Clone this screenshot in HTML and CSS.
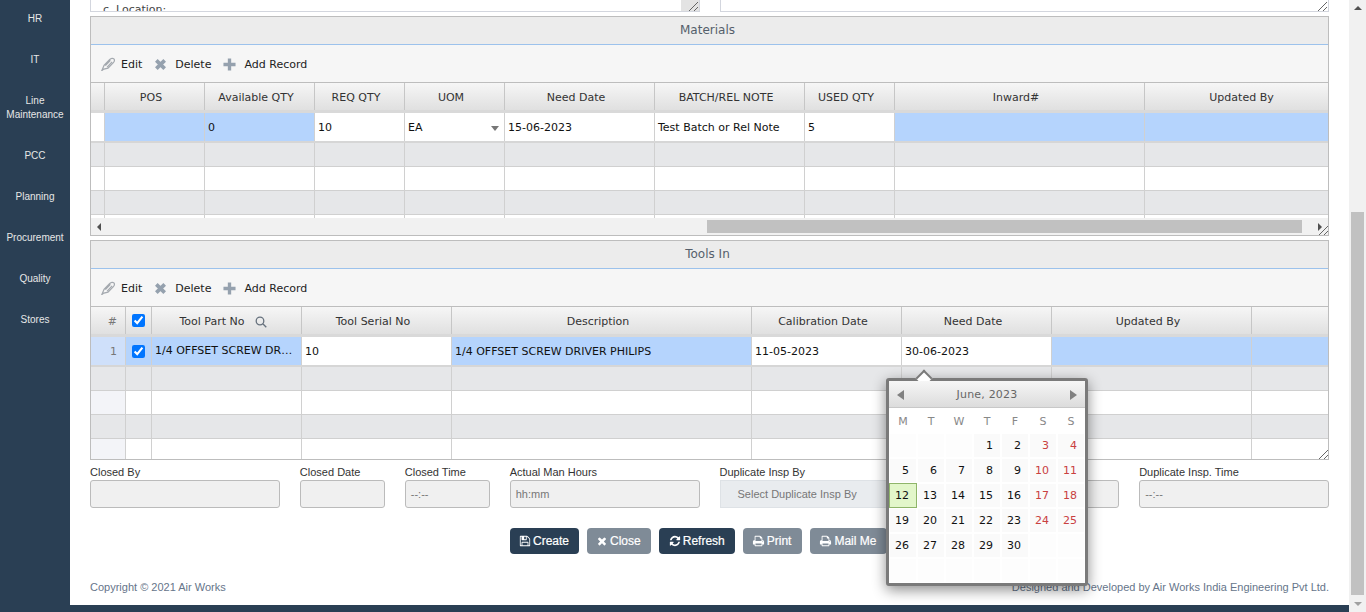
FILE: index.html
```html
<!DOCTYPE html>
<html lang="en">
	<head>
		<meta charset="UTF-8">
		<title>Air Works</title>
		<link rel="stylesheet" href="styles.css">
	</head>
	<body>
		<svg class="defs" width="0" height="0">
			<symbol id="i-save" viewBox="0 0 1792 1792"><path d="M512 1536h768v-384h-768v384zm896 0h128v-896q0-14-10-38.5t-20-34.5l-281-281q-10-10-34-20t-39-10v416q0 40-28 68t-68 28h-576q-40 0-68-28t-28-68v-416h-128v1280h128v-416q0-40 28-68t68-28h832q40 0 68 28t28 68v416zm-384-928v-320q0-13-9.5-22.5t-22.5-9.5h-192q-13 0-22.5 9.5t-9.5 22.5v320q0 13 9.5 22.5t22.5 9.5h192q13 0 22.5-9.5t9.5-22.5zm640 32v928q0 40-28 68t-68 28h-1344q-40 0-68-28t-28-68v-1344q0-40 28-68t68-28h928q40 0 88 20t76 48l280 280q28 28 48 76t20 88z"/></symbol>
			<symbol id="i-times" viewBox="0 0 1792 1792"><path d="M1490 1322q0 40-28 68l-136 136q-28 28-68 28t-68-28l-294-294-294 294q-28 28-68 28t-68-28l-136-136q-28-28-28-68t28-68l294-294-294-294q-28-28-28-68t28-68l136-136q28-28 68-28t68 28l294 294 294-294q28-28 68-28t68 28l136 136q28 28 28 68t-28 68l-294 294 294 294q28 28 28 68z"/></symbol>
			<symbol id="i-refresh" viewBox="0 0 1792 1792"><path d="M1639 1056q0 5-1 7-64 268-268 434.5t-478 166.5q-146 0-282.5-55t-243.5-157l-129 129q-19 19-45 19t-45-19-19-45v-448q0-26 19-45t45-19h448q26 0 45 19t19 45-19 45l-137 137q71 66 161 102t187 36q134 0 250-65t186-179q11-17 53-117 8-23 30-23h192q13 0 22.5 9.5t9.5 22.5zm25-800v448q0 26-19 45t-45 19h-448q-26 0-45-19t-19-45 19-45l138-138q-148-137-349-137-134 0-250 65t-186 179q-11 17-53 117-8 23-30 23h-199q-13 0-22.5-9.5t-9.5-22.5v-7q65-268 270-434.5t480-166.5q146 0 284 55.5t245 156.5l130-129q19-19 45-19t45 19 19 45z"/></symbol>
			<symbol id="i-print" viewBox="0 0 1792 1792"><path d="M448 1536h896v-256h-896v256zm0-640h896v-384h-160q-40 0-68-28t-28-68v-160h-640v640zm1152 64q0-26-19-45t-45-19-45 19-19 45 19 45 45 19 45-19 19-45zm128 0v416q0 13-9.5 22.5t-22.5 9.5h-224v160q0 40-28 68t-68 28h-960q-40 0-68-28t-28-68v-160h-224q-13 0-22.5-9.5t-9.5-22.5v-416q0-79 56.5-135.5t135.5-56.5h64v-544q0-40 28-68t68-28h672q40 0 88 20t76 48l152 152q28 28 48 76t20 88v256h64q79 0 135.5 56.5t56.5 135.5z"/></symbol>
			<symbol id="i-edit" viewBox="0 0 16 16"><path d="M1 15.500 3.500 9.500 10 2.800c1.500-1.500 3.700-1.700 4.700-.6 1 1.200.5 3.200-.8 4.500L8 12.800 3.300 13.800zM5 9.800 10.800 3.800M7 11.500l5.700-6" fill="none" stroke="#a4a9af" stroke-width="1.400"/></symbol>
			<symbol id="i-delete" viewBox="0 0 14 14"><path d="M2.500 2.500l9 9M11.500 2.500l-9 9" fill="none" stroke="#95a1ae" stroke-width="4"/></symbol>
			<symbol id="i-add" viewBox="0 0 14 14"><path d="M7 .5v13M.5 7h13" fill="none" stroke="#95a1ae" stroke-width="3.600"/></symbol>
			<symbol id="i-grip" viewBox="0 0 10 10"><path d="M1 10 10 1M6 10l4-4" fill="none" stroke="#666" stroke-width="1"/></symbol>
		</svg>

		<div class="app">
			<nav class="sidebar">
				<a>HR</a>
				<a>IT</a>
				<a>Line Maintenance</a>
				<a>PCC</a>
				<a>Planning</a>
				<a>Procurement</a>
				<a>Quality</a>
				<a>Stores</a>
			</nav>

			<main class="main">
				<div class="content">
					<div class="notes">
						<div class="note note-left">c. Location:<span class="note-corner"><svg class="grip"><use href="#i-grip"/></svg></span></div>
						<div class="note note-right"><svg class="grip"><use href="#i-grip"/></svg></div>
					</div>

					<section class="panel">
						<h2 class="panel-title">Materials</h2>
						<div class="toolbar">
							<span class="tool tool-edit"><svg class="ico-edit"><use href="#i-edit"/></svg>Edit</span>
							<span class="tool"><svg class="ico-tool"><use href="#i-delete"/></svg>Delete</span>
							<span class="tool"><svg class="ico-tool"><use href="#i-add"/></svg>Add Record</span>
						</div>
						<div class="grid grid-mat">
							<div class="row row-head">
								<span></span><span>POS</span><span>Available QTY</span><span>REQ QTY</span><span>UOM</span><span>Need Date</span><span>BATCH/REL NOTE</span><span>USED QTY</span><span>Inward#</span><span>Updated By</span>
							</div>
							<div class="row row-sel">
								<span class="edit"></span><span></span><span>0</span><span class="edit">10</span><span class="edit uom">EA<i class="caret"></i></span><span class="edit">15-06-2023</span><span class="edit">Test Batch or Rel Note</span><span class="edit">5</span><span></span><span></span>
							</div>
							<div class="row row-grey"><span></span><span></span><span></span><span></span><span></span><span></span><span></span><span></span><span></span><span></span></div>
							<div class="row"><span></span><span></span><span></span><span></span><span></span><span></span><span></span><span></span><span></span><span></span></div>
							<div class="row row-grey"><span></span><span></span><span></span><span></span><span></span><span></span><span></span><span></span><span></span><span></span></div>
							<div class="row"><span></span><span></span><span></span><span></span><span></span><span></span><span></span><span></span><span></span><span></span></div>
						</div>
						<div class="hscroll">
							<i class="arrow arrow-left"></i>
							<div class="hscroll-track"><div class="hscroll-thumb"></div></div>
							<i class="arrow arrow-right"></i>
						</div>
						<svg class="grip grip-panel"><use href="#i-grip"/></svg>
					</section>

					<section class="panel">
						<h2 class="panel-title">Tools In</h2>
						<div class="toolbar">
							<span class="tool tool-edit"><svg class="ico-edit"><use href="#i-edit"/></svg>Edit</span>
							<span class="tool"><svg class="ico-tool"><use href="#i-delete"/></svg>Delete</span>
							<span class="tool"><svg class="ico-tool"><use href="#i-add"/></svg>Add Record</span>
						</div>
						<div class="grid grid-tools">
							<div class="row row-head">
								<span class="num">#</span><span class="check"><input type="checkbox" checked></span>
								<span class="with-search">Tool Part No<svg class="ico-search" viewBox="0 0 12 12"><circle cx="5" cy="5" r="3.800"/><path d="M8 8l3.300 3.300"/></svg></span>
								<span>Tool Serial No</span><span>Description</span><span>Calibration Date</span><span>Need Date</span><span>Updated By</span><span></span>
							</div>
							<div class="row row-sel">
								<span class="num num-sel">1</span><span class="check"><input type="checkbox" checked></span>
								<span class="clip">1/4 OFFSET SCREW DRIVER PHILIPS</span><span class="edit">10</span><span>1/4 OFFSET SCREW DRIVER PHILIPS</span><span class="edit">11-05-2023</span><span class="edit">30-06-2023</span><span></span><span></span>
							</div>
							<div class="row row-grey"><span></span><span></span><span></span><span></span><span></span><span></span><span></span><span></span><span></span></div>
							<div class="row"><span class="rowhead"></span><span></span><span></span><span></span><span></span><span></span><span></span><span></span><span></span></div>
							<div class="row row-grey"><span></span><span></span><span></span><span></span><span></span><span></span><span></span><span></span><span></span></div>
							<div class="row"><span class="rowhead"></span><span></span><span></span><span></span><span></span><span></span><span></span><span></span><span></span></div>
						</div>
						<svg class="grip grip-panel"><use href="#i-grip"/></svg>

						<div class="calendar">
							<i class="cal-tip"></i>
							<div class="cal-head"><i class="arrow-lg arrow-lg-left"></i><span>June, 2023</span><i class="arrow-lg arrow-lg-right"></i></div>
							<div class="cal-dow"><span>M</span><span>T</span><span>W</span><span>T</span><span>F</span><span>S</span><span>S</span></div>
							<div class="cal-days">
								<span></span><span></span><span></span><span>1</span><span>2</span><span class="we">3</span><span class="we">4</span>
								<span>5</span><span>6</span><span>7</span><span>8</span><span>9</span><span class="we">10</span><span class="we">11</span>
								<span class="today">12</span><span>13</span><span>14</span><span>15</span><span>16</span><span class="we">17</span><span class="we">18</span>
								<span>19</span><span>20</span><span>21</span><span>22</span><span>23</span><span class="we">24</span><span class="we">25</span>
								<span>26</span><span>27</span><span>28</span><span>29</span><span>30</span><span></span><span></span>
								<span></span><span></span><span></span><span></span><span></span><span></span><span></span>
							</div>
						</div>
					</section>

					<div class="fields">
						<div class="field f-wide"><label>Closed By</label><div class="input"></div></div>
						<div class="field f-small"><label>Closed Date</label><div class="input"></div></div>
						<div class="field f-small"><label>Closed Time</label><div class="input">--:--</div></div>
						<div class="field f-wide"><label>Actual Man Hours</label><div class="input">hh:mm</div></div>
						<div class="field f-wide"><label>Duplicate Insp By</label><div class="input input-select">Select Duplicate Insp By</div></div>
						<div class="field f-wide"><label>&nbsp;</label><div class="input"></div></div>
						<div class="field f-wide"><label>Duplicate Insp. Time</label><div class="input">--:--</div></div>
					</div>

					<div class="actions">
						<button class="btn"><svg><use href="#i-save"/></svg>Create</button>
						<button class="btn btn-muted"><svg><use href="#i-times"/></svg>Close</button>
						<button class="btn btn-refresh"><svg><use href="#i-refresh"/></svg>Refresh</button>
						<button class="btn btn-muted btn-print"><svg><use href="#i-print"/></svg>Print</button>
						<button class="btn btn-muted btn-print"><svg><use href="#i-print"/></svg>Mail Me</button>
					</div>

					<footer class="copy">
						<span>Copyright © 2021 Air Works</span>
						<span>Designed and Developed by Air Works India Engineering Pvt Ltd.</span>
					</footer>
				</div>
				<div class="strip"></div>
			</main>

			<div class="vscroll">
				<i class="vs-up"></i>
				<div class="vs-track"><div class="vs-thumb"></div></div>
				<i class="vs-down"></i>
			</div>
		</div>
	</body>
</html>
```

FILE: styles.css
```css
* {
	box-sizing: border-box;
}
html, body {
	margin: 0;
	height: 100%;
	overflow: hidden;
}
body {
	font-family: "Liberation Sans", Arial, sans-serif;
	font-size: 11px;
	color: #222;
	background-color: #fff;
}
.defs {
	position: absolute;
}

.app {
	display: flex;
	height: 612px;
}

/* left menu */
.sidebar {
	width: 70px;
	flex: none;
	padding-top: 12px;
	background-color: #2a3f54;
	display: flex;
	flex-direction: column;
	gap: 27px;
}
.sidebar a {
	color: #e7e7e7;
	font-size: 10px;
	line-height: 14px;
	text-align: center;
}

.main {
	flex: 1;
	min-width: 0;
	display: flex;
	flex-direction: column;
}
.content {
	flex: 1;
	padding: 0 20px;
	min-height: 0;
}
.strip {
	height: 7px;
	flex: none;
	background-color: #2a3f54;
}

/* clipped text areas on top */
.notes {
	display: flex;
	gap: 20px;
	height: 12px;
	margin-bottom: 4px;
}
.note {
	flex: 1;
	height: 12px;
	overflow: hidden;
	position: relative;
	border: 1px solid #d3d6de;
	border-top: 0;
	font-family: "DejaVu Sans", Verdana, sans-serif;
	font-size: 11px;
	line-height: 14px;
	padding: 3px 12px 0;
	color: #444;
}
.note-corner {
	position: absolute;
	right: 0;
	top: 0;
	width: 18px;
	height: 11px;
	background-color: #e3e3e3;
}
.grip {
	position: absolute;
	right: 1px;
	bottom: 0;
	width: 10px;
	height: 10px;
}

/* grid panels */
.panel {
	position: relative;
	height: 220px;
	margin-bottom: 4px;
	border: 1px solid #bdbdbd;
	font-family: "DejaVu Sans", Verdana, sans-serif;
	font-size: 11px;
	display: flex;
	flex-direction: column;
}
.panel-title {
	margin: 0;
	height: 28px;
	flex: none;
	padding-right: 4px;
	background-color: #ececec;
	border-bottom: 1px solid #9cc2ec;
	font-size: 12px;
	font-weight: normal;
	line-height: 26px;
	text-align: center;
	color: #555f6b;
}
.toolbar {
	height: 38px;
	flex: none;
	display: flex;
	align-items: center;
	gap: 12px;
	padding: 1px 0 0 10px;
	background-color: #f6f6f6;
	border-bottom: 1px solid #bdbdbd;
	color: #222;
}
.tool {
	display: flex;
	align-items: center;
	gap: 8px;
}
.tool-edit {
	gap: 6px;
}
.ico-edit {
	width: 14px;
	height: 14px;
}
.ico-tool {
	width: 13px;
	height: 13px;
}
.grip-panel {
	right: 0;
	bottom: 0;
}

.grid {
	flex: 1;
	min-height: 0;
	overflow: hidden;
}
.row {
	display: grid;
	height: 24px;
	background-color: #fff;
	border-bottom: 1px solid #d0d0d0;
}
.grid-mat .row {
	grid-template-columns: 14px 100px 110px 90px 100px 150px 150px 90px 250px 200px;
}
.grid-tools .row {
	grid-template-columns: 35px 26px 150px 150px 300px 150px 150px 200px 76px;
}
.row > span {
	border-right: 1px solid #d0d0d0;
	padding-left: 3px;
	min-width: 0;
	color: #111;
	display: flex;
	align-items: center;
	white-space: nowrap;
	overflow: hidden;
}
.row > span:last-child {
	border-right: 0;
}
.row-head {
	height: 30px;
	background: linear-gradient(#f6f6f6, #e0e0e0);
	border-bottom: 3px solid #d9d9d9;
}
.row-head > span {
	justify-content: center;
	padding: 2px 7px 0 0;
	border-right-color: #c6c6c6;
	color: #333;
}
.row-sel {
	height: 30px;
	background-color: #b5d4fd;
	border-bottom: 2px solid #d6d6d6;
}
.row-grey {
	background-color: #e6e7e9;
}
.row .edit {
	background-color: #fff;
}
.row .uom {
	justify-content: space-between;
	padding-right: 5px;
}
.caret {
	margin-top: 2px;
	border-left: 4px solid transparent;
	border-right: 4px solid transparent;
	border-top: 5px solid #777;
}
.row .rowhead {
	background-color: #f3f4f8;
}
.row .num {
	justify-content: flex-end;
	padding-right: 8px;
	color: #777;
}
.row .num-sel {
	background-color: #cfe0fa;
}
.row .check {
	justify-content: center;
	padding: 0;
}
.check input {
	margin: 0;
	width: 13px;
	height: 13px;
}
.row .with-search {
	gap: 10px;
}
.ico-search {
	width: 12px;
	height: 12px;
	fill: none;
	stroke: #66717d;
	stroke-width: 1.300;
}
.row .clip {
	display: block;
	line-height: 28px;
	padding-right: 6px;
	text-overflow: ellipsis;
}

/* horizontal scrollbar of the grid */
.hscroll {
	height: 17px;
	flex: none;
	display: flex;
	align-items: center;
	background-color: #f1f1f1;
}
.hscroll-track {
	flex: 1;
	height: 13px;
}
.hscroll-thumb {
	height: 13px;
	margin-left: 601px;
	margin-right: 10px;
	background-color: #c1c1c1;
}
.arrow {
	flex: none;
	margin: 0 5px 0 6px;
	border-top: 4px solid transparent;
	border-bottom: 4px solid transparent;
}
.arrow-left {
	border-right: 4px solid #505050;
}
.arrow-right {
	margin-right: 6px;
	border-left: 4px solid #505050;
}

/* date picker popup */
.calendar {
	position: absolute;
	left: 795px;
	top: 137px;
	width: 202px;
	height: 208px;
	z-index: 5;
	background-color: #fff;
	border: 3px solid #7a7a7a;
	border-radius: 3px;
	box-shadow: 0 4px 14px rgba(0, 0, 0, 0.45);
}
.cal-tip {
	position: absolute;
	left: 29px;
	top: -9px;
	width: 12px;
	height: 12px;
	background-color: #fff;
	border-left: 2px solid #7a7a7a;
	border-top: 2px solid #7a7a7a;
	transform: rotate(45deg);
}
.cal-head {
	position: relative;
	height: 27px;
	display: flex;
	align-items: center;
	justify-content: space-between;
	padding: 1px 8px 0;
	background: linear-gradient(#f6f6f6, #dcdcdc);
	border-bottom: 1px solid #c8c8c8;
	color: #666;
	letter-spacing: 0.2px;
}
.arrow-lg {
	border-top: 5.500px solid transparent;
	border-bottom: 5.500px solid transparent;
}
.arrow-lg-left {
	border-right: 7px solid #808080;
}
.arrow-lg-right {
	border-left: 7px solid #808080;
}
.cal-dow {
	display: grid;
	grid-template-columns: repeat(7, 26px);
	gap: 2px;
	height: 26px;
	padding: 1px 0 0 1px;
	align-items: center;
	text-align: center;
	color: #888;
}
.cal-days {
	display: grid;
	grid-template-columns: repeat(7, 26px);
	grid-auto-rows: 23px;
	gap: 2px;
	padding-left: 1px;
}
.cal-days span {
	background-color: #fafafa;
	text-align: right;
	padding-right: 7px;
	line-height: 24px;
	color: #111;
}
.cal-days span:empty {
	background-color: #fdfdfd;
}
.cal-days .we {
	color: #c9403f;
}
.cal-days .today {
	background-color: #e2f6ca;
	outline: 1px solid #8fb56a;
}

/* form fields under the grids */
.fields {
	display: flex;
	gap: 20px;
	margin-top: 6px;
}
.field label {
	display: block;
	height: 14px;
	line-height: 13px;
	color: #333;
}
.f-wide {
	width: 190px;
}
.f-small {
	width: 85px;
}
.input {
	height: 28px;
	line-height: 26px;
	padding-left: 5px;
	background-color: #f0f0f0;
	border: 1px solid #bbb;
	border-radius: 3px;
	color: #777;
}
.input-select {
	padding-left: 17px;
	background-color: #e9ecef;
	border-color: #dee2e6;
	border-radius: 0;
}

.actions {
	display: flex;
	gap: 8px;
	margin: 20px 0 0 420px;
}
.btn {
	height: 26px;
	padding: 0 10px 0 9px;
	display: flex;
	align-items: center;
	gap: 2px;
	border: 0;
	border-radius: 4px;
	background-color: #2a3f54;
	color: #fff;
	font-family: "Liberation Sans", Arial, sans-serif;
	font-size: 12px;
	-webkit-text-stroke: 0.2px #fff;
}
.btn svg {
	width: 12px;
	height: 12px;
	fill: #fff;
}
.btn-refresh {
	padding-left: 10px;
}
.btn-print svg {
	width: 13px;
}
.btn-print {
	padding-right: 11px;
}
.btn-muted {
	background-color: #7f8b97;
}

.copy {
	display: flex;
	justify-content: space-between;
	margin-top: 26px;
	color: #66758a;
	line-height: 14px;
}

/* page scrollbar */
.vscroll {
	width: 17px;
	flex: none;
	background-color: #f1f1f1;
	display: flex;
	flex-direction: column;
	align-items: center;
}
.vs-up, .vs-down {
	flex: none;
	margin: 6px 0;
	border-left: 4px solid transparent;
	border-right: 4px solid transparent;
}
.vs-up {
	border-bottom: 4px solid #505050;
}
.vs-down {
	border-top: 4px solid #a0a0a0;
}
.vs-track {
	flex: 1;
	width: 100%;
	padding: 196px 2px 0;
}
.vs-thumb {
	height: 383px;
	background-color: #c1c1c1;
}
```
